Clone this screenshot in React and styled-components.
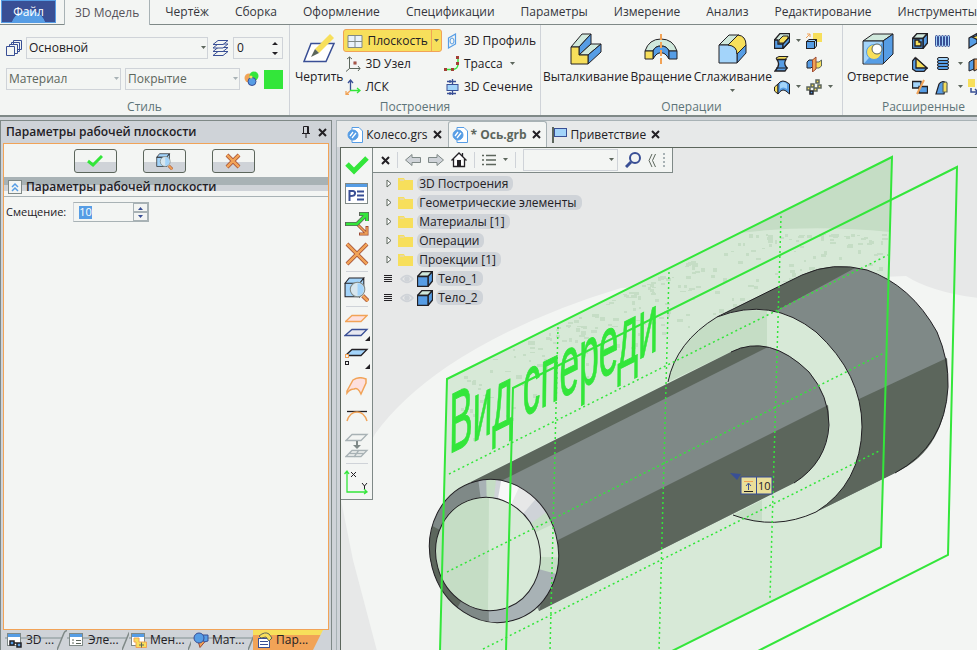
import React from "react";
import styled, { createGlobalStyle } from "styled-components";

const c = {
  paper: "#f3f5f3", chrome: "#cfd3d8", line: "#cfd3d8", mid: "#a8b2b5", steel: "#7f8987",
  dark: "#5c665c", ink: "#222024", navy: "#394f95", blue: "#569de5", sky: "#a3d4fa",
  mint: "#d0e9dc", yellow: "#f7df5b", orange: "#f1a357", green: "#33e63a", group: "#5d7478",
};

const GlobalStyle = createGlobalStyle`
  *, *::before, *::after { box-sizing: border-box; }
  body { margin: 0; overflow: hidden; background: ${c.chrome}; color: ${c.ink};
    font: 12px/16px "Open Sans", "Noto Sans", sans-serif; }
  button, input, select { font: inherit; color: inherit; margin: 0; padding: 0; }
  button { border: 0; background: none; white-space: nowrap; }
  svg { display: block; flex: none; }
`;

/* ---------- frame ---------- */
const Page = styled.div`display: flex; flex-direction: column; height: 100vh; overflow: hidden;`;
const TabBar = styled.nav`display: flex; flex: none; height: 25px; background: ${c.paper};
  border-bottom: 1px solid ${c.steel}; padding-left: 1px;`;
const FileTab = styled.button`flex: none; width: 55px; height: 23px; margin-right: 8px; color: #fff;
  border: 1px solid ${c.blue}; background: radial-gradient(ellipse at 50% 130%, ${c.blue} 0 46%, ${c.navy} 48%);`;
const RibbonTab = styled.button`
  flex: none; height: 24px; padding: 0 ${(p) => (p.$active ? 10 : 13)}px; color: #35353c;
  ${(p) => p.$active && `height: 25px; background: ${c.paper}; border: 1px solid ${c.mid};
    border-width: 0 1px; margin-right: 2px; color: #55525a;`}
`;
const Ribbon = styled.div`display: flex; flex: none; height: 92px; overflow: hidden; background: ${c.paper};
  border-bottom: 2px solid ${c.steel};`;
const Group = styled.section`
  display: flex; flex-direction: column; flex: none;
  padding: 4px ${(p) => p.$pad || 4}px 0; width: ${(p) => p.$width}px;
  border-right: 1px solid ${c.line};
`;
const GroupBody = styled.div`display: flex; height: 69px; gap: ${(p) => p.$gap || 0}px;`;
const GroupName = styled.h2`margin: 0; font-size: 12px; line-height: 17px; font-weight: 400; text-align: center; color: ${c.group};`;

/* ---------- ribbon controls ---------- */
const StyleRows = styled.div`display: flex; height: 69px; flex-direction: column; gap: 9px; padding-top: 8px;`;
const Row = styled.div`display: flex; align-items: center; gap: 4px;`;
const Combo = styled.div`
  position: relative; display: flex; flex: 1; min-width: 0;
  select { appearance: none; width: 100%; height: 22px; border: 1px solid ${c.line}; border-radius: 0;
    background: ${c.paper}; padding: 0 2px; color: ${(p) => (p.$muted ? c.dark : c.ink)}; outline: 0; }
  svg { position: absolute; right: 2px; top: 9px; pointer-events: none; }
`;
const Spin = styled.div`
  display: flex; align-items: center; width: 50px; height: 22px; border: 1px solid ${c.line}; padding-right: 4px;
  input { flex: 1; min-width: 0; border: 0; background: none; padding-left: 3px; outline: 0; }
`;
const Swatch = styled.button`width: 19px; height: 19px; background: ${c.green};`;
const BigButton = styled.button`
  display: flex; flex-direction: column; align-items: center; gap: 4px; flex: none; height: 69px; padding-top: 4px;
`;
const Column = styled.div`display: flex; flex-direction: column; flex: none; align-items: flex-start;`;
const SmallButton = styled.button`display: flex; align-items: center; gap: 4px; height: 23px; padding: 0 2px;`;
const SplitButton = styled.div`
  display: flex; height: 23px; border: 1px solid ${c.orange}; border-radius: 3px; background: ${c.yellow};
  button { display: flex; align-items: center; gap: 4px; padding: 0 3px; }
  button + button { border-left: 1px solid ${c.orange}; padding: 0 2px; }
`;
const IconGrid = styled.div`
  display: grid; flex: none; grid-template-columns: ${(p) => p.$cols}; grid-auto-rows: 23px; align-items: center;
  margin-left: ${(p) => p.$lead || 0}px;
  button { width: 16px; height: 16px; display: flex; align-items: center; }
`;

/* ---------- workspace ---------- */
const Workspace = styled.div`display: flex; flex: 1; min-height: 0; padding-top: 3px; gap: 4px;`;
const SidePanel = styled.aside`
  display: flex; flex-direction: column; flex: 0 0 34%; border: 1px solid ${c.steel}; border-width: 1px 1px 0; padding: 0 2px;
`;
const PanelTitle = styled.header`
  display: flex; align-items: center; height: 22px; flex: none; gap: 8px; padding: 0 3px;
  h1 { margin: 0 auto 0 0; font-size: 12px; font-weight: 600; line-height: 16px; }
  button { width: 8px; }
`;
const PanelBody = styled.form`flex: 1; min-height: 0; border: 1px solid ${c.orange}; background: ${c.paper};`;
const Confirm = styled.div`
  display: flex; justify-content: center; gap: 26px; padding: 5px 4px 4px 0;
  button { display: grid; place-items: center; width: 43px; height: 24px; border: 1px solid ${c.dark}; border-radius: 3px;
    background: linear-gradient(${c.paper} 55%, ${c.line} 55%); }
`;
const SectionHead = styled.div`
  display: flex; align-items: center; gap: 4px; height: 20px; padding-left: 4px; border-bottom: 1px solid ${c.mid};
  background: linear-gradient(${c.mid} 0 8px, ${c.line} 8px 14px, ${c.paper} 14px);
  h2 { margin: 0; font-size: 12px; line-height: 16px; font-weight: 600; }
  button { display: grid; place-items: center; width: 14px; height: 14px; background: ${c.paper}; border: 1px solid ${c.steel}; }
`;
const Field = styled.div`display: flex; align-items: center; gap: 7px; padding: 5px 2px; font-size: 11px;`;
const OffsetBox = styled.div`
  display: flex; justify-content: space-between; width: 76px; height: 20px; border: 1px solid ${c.mid};
  border-left-color: ${c.line}; padding-left: 5px; align-items: center;
  input { width: 13px; height: 13px; border: 0; background: ${c.blue}; color: #fff; outline: 0; }
`;
const Stepper = styled.div`
  display: flex; flex-direction: column;
  button { display: grid; place-items: center; width: 15px; height: 9px; background: ${c.paper}; border: 1px solid ${c.mid}; }
`;
const PanelTabs = styled.div`display: flex; flex: none; height: 20px; padding-left: 2px;`;
const PanelTab = styled.button`
  display: flex; align-items: center; justify-content: flex-start; gap: 3px; flex: none; width: 62px; padding-left: 2px;
  background: linear-gradient(${c.chrome} 7px, ${c.mid} 7px 9px, ${c.chrome} 9px);
  > svg + svg { margin-left: auto; }
  ${(p) => p.$active && `background: linear-gradient(${c.yellow} 5px, ${c.orange} 5px);
    clip-path: polygon(0 0, 100% 0, calc(100% - 10px) 100%, 0 100%); width: 70px; padding-left: 4px;`}
`;

const Documents = styled.main`display: flex; flex-direction: column; flex: 1; min-width: 0; border: 1px solid ${c.mid}; border-width: 1px 0 0 1px;`;
const DocTabs = styled.div`display: flex; flex: none; height: 26px; padding-left: 6px; background: #e7e9e9;`;
const DocTab = styled.div`
  display: flex; align-items: center; gap: 3px; padding: 0 3px; border: 1px solid transparent; border-bottom: 0;
  font-weight: ${(p) => (p.$active ? 700 : 400)}; border-radius: 3px 3px 0 0;
  ${(p) => p.$active && `background: ${c.paper}; border-color: ${c.mid}; color: ${c.dark};`}
  > button:first-child { display: flex; align-items: center; gap: 3px; font-weight: inherit; }
  > button:last-child { padding: 0 2px; }
`;
const Viewport = styled.div`
  display: grid; flex: 1; min-height: 0; margin-left: 3px; border: 1px solid ${c.dark}; border-width: 1px 0 0 1px;
  grid-template: minmax(0, 1fr) / minmax(0, 1fr); overflow: hidden;
  > * { grid-area: 1 / 1; }
`;
const Overlay = styled.div`display: flex; align-items: flex-start; min-height: 0; z-index: 1;`;
const ToolStrip = styled.div`
  display: flex; flex-direction: column; align-items: center; width: 32px; flex: none; background: ${c.paper};
  border: 1px solid ${c.steel}; border-width: 0 1px 1px 0; padding: 3px 0 1px;
  hr { width: 22px; height: 1px; margin: 2px 0; border: 0; background: ${c.line}; }
`;
const StripButton = styled.button`display: grid; place-items: center; width: 28px; height: ${(p) => p.$h || 30}px;`;
const TreeBar = styled.div`
  display: flex; align-items: center; width: 300px; height: 25px; padding: 0 7px 0 8px; gap: 7px;
  background: ${c.paper}; border: 1px solid ${c.steel}; border-width: 0 1px 1px 0;
  i { width: 1px; height: 16px; background: ${c.line}; }
`;
const TreeSearch = styled.div`
  position: relative; flex: 1; min-width: 0;
  input { display: block; width: 100%; height: 22px; border: 1px solid ${c.line}; background: ${c.paper}; outline: 0; }
  svg { position: absolute; right: 4px; top: 9px; }
`;
const Tree = styled.ul`list-style: none; margin: 0; padding: 1px 0 0 11px;`;
const Node = styled.li`
  display: flex; align-items: center; height: 19px; gap: ${(p) => (p.$body ? 3 : 6)}px;
  span { padding: 0 5px 0 2px; height: 15px; line-height: 15px; border-radius: 6px; background: ${c.line};
    margin-left: ${(p) => (p.$body ? 0 : -2)}px; }
  svg:first-child { margin: 0 ${(p) => (p.$body ? 5 : 0)}px 0 ${(p) => (p.$body ? 0 : 2)}px; }
`;
const Scene = styled.svg`width: 100%; height: 100%;`;

/* ---------- icons ---------- */
const Svg = ({ w = 16, h = 16, children, s = c.ink, f = "none", sw = 1 }) => (
  <svg width={w} height={h} viewBox={`0 0 ${w} ${h}`} fill={f} stroke={s} strokeWidth={sw} aria-hidden="true">{children}</svg>
);
const P = ({ d, f, s, w }) => <path d={d} fill={f} stroke={s} strokeWidth={w} />;
const Down = ({ color = c.dark }) => <Svg w={5} h={4} s="none" f={color}><P d="M0 0H5L2.500 3Z" /></Svg>;
const UpDown = () => <Svg w={6} h={14} s="none" f={c.ink}><P d="M0 4L3 1L6 4ZM0 11H6L3 14Z" /></Svg>;
const Cross = ({ size = 9, color = c.ink, w = 2 }) => <Svg w={size} h={size} s={color} sw={w}><P d={`M1 1L${size - 1} ${size - 1}M${size - 1} 1L1 ${size - 1}`} /></Svg>;

const Pages = () => <Svg s={c.navy} f={c.paper}><P d="M7.500 .5H15.500V9.500H7.500ZM5.500 2.500H13.500V11.500H5.500Z" /><P d="M3.500 4.500H11.500V13.500H3.500Z" /><P d="M.5 6.500H8.500V15.500H.5Z" /></Svg>;
const Levels = () => <Svg w={17} s={c.navy} f={c.paper}><P d="M1 15.500L6 11.500H16L11 15.500Z" /><P d="M1 11.500L6 7.500H16L11 11.500Z" /><P d="M1 8L6 4H16L11 8Z" /><P d="M1 4.500L6 .5H16L11 4.500Z" /></Svg>;
const Palette = () => <Svg s="none"><circle cx="5" cy="7" r="4.500" fill={c.orange} /><circle cx="10" cy="5" r="4.500" fill={c.green} /><circle cx="8" cy="10.500" r="4" fill={c.blue} stroke={c.navy} /><circle cx="7" cy="6" r="1.500" fill={c.yellow} /></Svg>;
const Draw = () => <Svg w={34} h={32} s="none"><P d="M9 10.500H32L24 28.500H2Z" f="#fff" s={c.navy} w={1.5} /><P d="M13 16L28 1L32 5L17 20Z" f={c.yellow} /><P d="M13 16L9 24L17 20Z" f={c.dark} /></Svg>;
const PlaneI = () => <Svg><P d="M1 2.500H15V14.500H1ZM8 2V15M1 8.500H15" f="#e9f2fb" s={c.steel} /></Svg>;
const Node3D = () => <Svg s={c.dark}><P d="M4.500 1V12.500H15M4.500 12.500L1 15.500M2 3L4.500 1L7 3M13 10L15 12.500L13 15" /><rect x="9" y="6" width="2" height="2" fill={c.orange} stroke="#8e3b3b" /></Svg>;
const LCS = () => <Svg><P d="M5.500 12V1M3 4L5.500 1L8 4" s={c.navy} w={1.3} /><P d="M5 11.500H15M12 9L15 11.500L12 14" s={c.green} w={1.3} /><P d="M5 12L1 15.500M1 12V15.500H4" s={c.orange} w={1.3} /></Svg>;
const Profile = () => <Svg s={c.blue}><P d="M4.500 5L11.500 1V11L4.500 15Z" w={1.2} /><ellipse cx="8" cy="8" rx="2" ry="3" /></Svg>;
const Trace = () => <Svg><P d="M1 13.500H9Q14 13 14 8V2" s={c.green} w={1.4} /><P d="M0 12H3V15H0ZM7 12H10V15H7ZM12 6H15V9H12ZM12 0H15V3H12Z" f="#a23f35" s="none" /></Svg>;
const Section = () => <Svg s={c.navy}><rect x="3" y="5.500" width="11" height="6" fill={c.sky} /><P d="M8.500 0V5M8.500 12V16M3 2.500H12M3 14.500H12M6 1V4M6 13V16" w={1.3} /></Svg>;
const Extrude = () => <Svg w={32} h={32}><g transform="translate(1 1)"><P d="M0 13L11 0H20L8 13Z" f={c.mint} /><P d="M8 13L20 0V10L8 21Z" f={c.blue} /><P d="M8 21L20 10H30L17 21Z" f={c.mint} /><P d="M17 21L30 10V18L17 30Z" f={c.blue} /><P d="M0 13H8V21H17V30H0Z" f={c.yellow} /></g></Svg>;
const Revolve = () => <Svg w={34} h={32}><g transform="translate(1 1)"><P d="M0 17Q4 5 16 5Q28 5 32 17H24Q22 12 16 12Q10 12 8 17Z" f={c.mint} /><P d="M8 17Q10 12 16 12Q22 12 24 17V25Q20 18 16 19Q12 18 8 25Z" f={c.blue} /><P d="M0 17H8V25H0Z" f={c.yellow} /><P d="M24 17H32V25H24Z" f={c.blue} /><path d="M16 0V30" stroke={c.orange} strokeWidth="2" strokeDasharray="6 2" /></g></Svg>;
const Smooth = () => <Svg w={30} h={32}><g transform="translate(1 1)"><P d="M0 11L10 1H20L10 11Z" f={c.mint} /><P d="M18 20L27 11V19L18 29Z" f={c.blue} /><P d="M0 11H9Q18 11 18 20V29H0Z" f={c.sky} /><P d="M9 11L19 1Q27 2 27 11L18 20Q18 12 9 11Z" f={c.yellow} /></g></Svg>;
const Hole = () => <Svg w={32} h={32}><g transform="translate(1 1)"><P d="M0 7L10 0H30L20 7Z" f={c.mint} /><P d="M20 7L30 0V20L20 30Z" f={c.blue} /><P d="M0 7H20V30H0Z" f={c.sky} /><P d="M20 8V29.500H1Z" f={c.blue} s="none" /><circle cx="11" cy="18" r="7.500" fill={c.yellow} stroke={c.blue} /><circle cx="14" cy="15" r="5" fill="#fff" stroke={c.dark} /></g></Svg>;
const cube = <><P d="M.5 5.500L5 .5H15.500L11 5.500Z" f={c.mint} /><P d="M11 5.500L15.500 .5V10L11 15.500Z" f={c.blue} /><P d="M.5 5.500H11V15.500H.5Z" f={c.blue} /></>;
const CubeI = () => <Svg sw={1.3}>{cube}</Svg>;
const Pocket = () => <Svg sw={1.3}><P d="M.5 7L6 .5H15.500V8.500L9 15.500H.5Z" f={c.mint} /><P d="M.5 7H4V11H9V15.500H.5Z" f={c.blue} /><P d="M9 11L15.500 4V8.500L9 15.500Z" f={c.blue} /><P d="M5 10V7L9 3H14V5L9.500 10Z" f={c.yellow} s={c.ink} w={1} /></Svg>;
const Loft = () => <Svg><P d="M2 2L5 .5H14L11 3.500H3Z" f={c.yellow} /><P d="M3 3.500H12Q9 8 13 12L11 15H1Q7 9 3 3.500Z" f={c.blue} w={1.3} /><P d="M2 12H14" /></Svg>;
const Sweep = () => <Svg><P d="M.5 8L4 5V15L.5 12Z" f={c.yellow} /><P d="M4 5Q8 -1 15.500 5V15L12 12Q8 9 4 15Z" f={c.blue} /><P d="M6 5Q9 1 13 5V10Q9 7 6 10Z" f={c.sky} s="none" /></Svg>;
const Move = () => <Svg><rect x="7" width="9" height="9" fill={c.yellow} stroke="none" /><P d="M.5 8.500L3 6.500H10.500L8.500 8.500ZM8.500 8.500L10.500 6.500V13L8.500 15.500Z" f={c.sky} /><rect x=".5" y="8.500" width="8" height="7" fill={c.blue} /><P d="M0 5L4 1M1 1H4V4" s={c.orange} /></Svg>;
const Mirror = () => <Svg><P d="M1 6L3 4H7V10L5 12H1Z" f={c.blue} /><P d="M9 6H13L15.500 4V10L13 12H9Z" f={c.yellow} s={c.dark} /><P d="M6.500 4L10 1V13L6.500 16Z" f={c.orange} s="#9d4a35" /></Svg>;
const Array3 = () => <Svg>{[[1, 8], [5, 5], [10, 1], [12, 6], [8, 9], [4, 12]].map(([x, y], i) => <rect key={i} x={x} y={y} width="3" height="3" fill={i === 5 ? c.blue : c.yellow} stroke={i === 5 ? c.ink : c.dark} strokeWidth="1.500" />)}</Svg>;
const Shell = () => <Svg sw={1.4}>{cube}<P d="M3 7H7V9H9V13H3Z" f={c.yellow} /></Svg>;
const Rib = () => <Svg sw={1.3}><P d="M.5 5L3 2L15 12L12 15.500H4L.5 13Z" f={c.blue} /><P d="M4 2V12H15Z" f={c.yellow} /></Svg>;
const Cut = () => <Svg sw={1.3}><P d="M.5 2.500H9V9H.5Z" f={c.sky} /><P d="M7 7.500H15.500V14H7Z" f={c.blue} /><P d="M12 1L5 15" s={c.orange} w={2} /></Svg>;
const Thread = () => <Svg><P d="M1 4H15V12H1Z" f={c.sky} s="none" />{[1, 4, 7, 10, 13].map((x) => <rect key={x} x={x - .5} y="2.500" width="2" height="11" rx="1" fill={c.sky} stroke={c.navy} />)}</Svg>;
const Spring = () => <Svg>{[2, 5, 8, 11].map((y) => <rect key={y} x="2.500" y={y - .5} width="11" height="3" rx="1.500" fill={y === 2 ? c.sky : c.blue} />)}</Svg>;
const Draft = () => <Svg sw={1.2}><P d="M1 15L4 5Q7 1 11 4L9 15Z" f={c.blue} /><P d="M8 4Q13 1 12 7V13H8Z" f={c.yellow} s={c.dark} /></Svg>;
const Bend = () => <Svg sw={1.2}><P d="M1 5L9 .5V10L1 15Z" f={c.blue} /><P d="M4 4L12 2V8Z" f={c.yellow} /></Svg>;
const Split = () => <Svg><P d="M1 6L6 3V13L1 15Z" f={c.blue} /><P d="M6 3H12V12L6 15Z" f={c.orange} /></Svg>;
const Copy = () => <Svg><rect width="7" height="8" fill={c.yellow} stroke="none" /><P d="M3 9V13H9M7 10L10 13L7 16" s={c.navy} w={1.5} /></Svg>;

const Tick = ({ big }) => <Svg w={big ? 24 : 16} h={big ? 20 : 12} s={c.green} sw={big ? 5 : 3}><P d={big ? "M2 9L9 16L22 3" : "M1 6L6 10L15 1"} /></Svg>;
const Cancel = ({ size = 16 }) => <Svg w={size} h={size}><P d={`M2 2L${size - 2} ${size - 2}M${size - 2} 2L2 ${size - 2}`} s="#9d4a35" w={4} /><P d={`M2 2L${size - 2} ${size - 2}M${size - 2} 2L2 ${size - 2}`} s={c.orange} w={2.5} /></Svg>;
const Look = ({ big }) => {
  const n = big ? 25 : 17;
  return <svg width={n} height={n} viewBox="0 0 24 24" aria-hidden="true"><g stroke={c.ink} fill={c.sky}><path d="M1 6L5 1H19L15 6ZM1 6H15V19H1ZM15 6L19 1V14L15 19Z" /></g><path d="M18 18L23 23" stroke="#9d4a35" strokeWidth="4" /><path d="M18 18L23 23" stroke={c.orange} strokeWidth="2.500" /><circle cx="13" cy="12" r="7" fill="#d7e6ee" stroke={c.steel} /><path d="M13 6A6 6 0 0 1 13 18Z" fill={c.sky} /></svg>;
};
const Pin = () => <Svg w={8} h={12}><P d="M1.500 7V.5H6.500V7M0 7.500H8M4 8V12M5.500 1V7" /></Svg>;
const Chevrons = () => <Svg w={8} h={10} s={c.blue} sw={1.5}><P d="M1 5L4 2L7 5M1 9L4 6L7 9" /></Svg>;
const Wedge = ({ up }) => <Svg w={7} h={4} s="none" f={c.navy}><P d={up ? "M1 4L3.500 1L6 4Z" : "M1 0H6L3.500 3Z"} /></Svg>;
const Slash = () => <Svg w={10} h={20} s={c.steel}><P d="M0 20L7 3Q8 1 10 .5V20Z" f={c.chrome} s="none" /><P d="M0 20L7 3Q8 1 10 .5" w={1.5} /></Svg>;
const win = <><rect x=".5" y="1.500" width="13" height="12" fill="#fff" stroke={c.steel} /><P d="M1 2H13V5H1Z" f={c.blue} s="none" /></>;
const ModelTab = () => <Svg>{win}<P d="M3 9H7V13H3ZM10 11H14V15H10ZM7 11H10" f={c.blue} w={1.5} /></Svg>;
const ListTab = () => <Svg>{win}<P d="M3 8H5M3 11H5M7 8.500H12M7 11.500H12" s={c.dark} /></Svg>;
const MenuTab = () => <Svg>{win}<P d="M3 6H8V10H15.500V15.500H5V10H3Z" f={c.yellow} s={c.orange} /><P d="M8 13H13M10.500 10.500V15.500" s={c.dark} /></Svg>;
const MatTab = () => <Svg><P d="M5 9L15 6L7 15.500Z" f={c.orange} s="#9d4a35" /><P d="M9 3H15V9L11 10Z" f={c.blue} s={c.navy} /><circle cx="6" cy="6" r="5" fill={c.blue} stroke={c.navy} /></Svg>;
const ParTab = () => <Svg><rect x="1.500" y="6.500" width="11" height="9" fill="#fff" stroke={c.navy} /><P d="M3 9.500H11M3 12.500H11" s={c.navy} /><P d="M2 4Q8 -1 12 2L15 6L12 9L9 5L4 6Z" f={c.yellow} s={c.dark} /></Svg>;
const DocIcon = () => <Svg><P d="M5 .5H12L15.500 4V15.500H5Z" f="#fff" s={c.blue} /><circle cx="6" cy="8" r="5" fill={c.blue} stroke={c.blue} /><P d="M3 9L6 5M5 11L9 6" s="#fff" w={1.3} /></Svg>;
const Flag = () => <Svg w={17}><P d="M2 0V16" w={2} s={c.dark} /><rect x="3.500" y="1.500" width="12" height="8" fill={c.sky} stroke={c.navy} /></Svg>;
const Props = () => <Svg w={23} h={22}><rect x=".5" y=".5" width="22" height="20" fill="#fff" stroke={c.steel} /><P d="M1 1H22V4H1Z" f={c.blue} s="none" /><P d="M4.500 18V8H8Q10.500 8.500 10 10.500Q10 13 5 13M12 8.500H19M12 12.500H19M12 16.500H19" s={c.navy} w={2} /></Svg>;
const Branch = () => <Svg w={24} h={24}><P d="M12 12L21 21M22 14V22H14" s="#9d4a35" w={3} /><P d="M12 12L21 21M22 15V22H15" s={c.orange} w={1.5} /><P d="M0 12H12L21 3M14 2H22V9" s={c.dark} w={4} /><P d="M1 12H12L21 3M15 2H22V9" s={c.green} w={2.5} /></Svg>;
const Sheet = ({ s, f, h = 9 }) => <Svg w={23} h={h} s={s}><P d="M.5 7.500L7 1.500H22L16 7.500Z" f={f} w={1.3} /></Svg>;
const SheetMore = () => <Svg w={26} h={14}><P d="M1 7.500L8 1.500H23L17 7.500Z" f="#e7e8f0" s={c.navy} w={1.3} /><P d="M26 8V13H21Z" f={c.ink} s="none" /></Svg>;
const SheetLink = () => <Svg w={26} h={24}><P d="M2 9L8 3.500H23L17 9.500H5" f={c.sky} w={1.3} /><rect x="1.500" y="8.500" width="3" height="3" fill={c.paper} stroke={c.orange} /><rect x="1.500" y="15.500" width="3" height="3" /><P d="M26 18V23H21Z" f={c.ink} s="none" /></Svg>;
const Surface = () => <Svg w={22} h={20} s={c.orange}><P d="M1 14L7 3Q13 -1 20 2V6L15 17Q12 10 8 12Q4 12 1 16Z" f="#fde0de" w={1.5} /></Svg>;
const Tangent = () => <Svg w={22} h={14}><P d="M1 2.500H21" w={1.3} /><P d="M1 12Q4 3 11 3Q18 3 21 12" s={c.orange} w={1.5} /></Svg>;
const Project = () => <Svg w={24} h={26} s={c.mid}><P d="M1 7.500L7 1.500H22L16 7.500ZM1 23.500L7 17.500H22L16 23.500ZM4 20.500H19M14 17L9 24" w={1.3} /><P d="M12 8V14" s={c.steel} w={2} /><P d="M8 12H16L12 16Z" f={c.steel} s="none" /></Svg>;
const Axes = () => <Svg w={25} h={26}><P d="M3 2V23H23M.5 5L3 2L5 5M20 20L23 23L20 25" s={c.green} w={1.3} /><P d="M7 3L12 8M12 3L7 8M18 14L20.500 17L23 14M20.500 17V20" s={c.ink} /></Svg>;
const Back = ({ flip }) => <Svg w={16} h={12} s={c.steel} f={c.line}><P d={flip ? "M15.500 6L9 .5V3.500H.5V8.500H9V11.500Z" : "M.5 6L7 .5V3.500H15.500V8.500H7V11.500Z"} /></Svg>;
const Home = () => <Svg><P d="M.5 8.500L8 1L15.500 8.500M2.500 7V14.500H13.500V7M11.500 1V4" f="#fff" w={1.3} /><P d="M6 8H10V15H6Z" f={c.ink} s="none" /></Svg>;
const ListI = () => <Svg w={14} h={12} s={c.dark} sw={1.5}><P d="M0 1.500H2M4 1.500H14M0 6H2M4 6H14M0 10.500H2M4 10.500H14" /></Svg>;
const Search = () => <Svg s={c.navy}><circle cx="10" cy="6" r="5" strokeWidth="2" /><P d="M6 10L1 15" w={3} /></Svg>;
const Collapse = () => <Svg w={8} h={13} s={c.dark}><P d="M4 0L1 6.500L4 13M7.500 0L4.500 6.500L7.500 13" /></Svg>;
const Grip = () => <Svg w={2} h={14} s={c.mid} sw={2}><path d="M1 0V14" strokeDasharray="2 2" /></Svg>;
const Folder = () => <Svg w={15} h={12} s="none"><P d="M0 0H6L7 2H15V12H0Z" f={c.yellow} /><P d="M2 1H6V3H2Z" f="#e8d9a0" /></Svg>;
const Twist = () => <Svg w={6} h={9} s={c.dark}><P d="M1 1V8L5 4.500Z" f="#fff" /></Svg>;
const Lines = () => <Svg w={8} h={9}><P d="M0 1.500H8M0 3.500H8M0 5.500H8M0 7.500H8" /></Svg>;
const Eye = () => <Svg w={14} h={10} s={c.line} sw={1.5}><P d="M1 5Q7 -2 13 5Q7 12 1 5Z" /><circle cx="7" cy="5" r="2" fill={c.line} /></Svg>;

/* ---------- model drawing ---------- */
const rand = (n) => Math.abs(Math.sin(n) * 43758.5453) % 1;
const specks = Array.from({ length: 260 }, (_, i) => {
  const a = rand(i * 12.9898 + 1);
  const b = rand(i * 78.233 + 5);
  const x = 452 + a * 432;
  const top = 376 - (x - 446) * 0.499;
  return { x: Math.round(x), y: Math.round(Math.max(top + 6, 234) + b * b * 70), w: 2 + Math.round(rand(i * 3.7) * 4), h: 1 + Math.round(rand(i * 9.1) * 3) };
});
const Dots = ({ d }) => <path d={d} fill="none" stroke={c.green} strokeWidth="1.500" strokeDasharray="2 3" />;

function Model() {
  return (
    <Scene aria-label="Ось">
      <defs>
        <clipPath id="sheet"><path d="M446 379L891 157L880 547L671 651H439Z" /></clipPath>
        <clipPath id="rim"><ellipse cx="493" cy="551" rx="64" ry="72" transform="rotate(-15 493 551)" /></clipPath>
      </defs>
      <g transform="translate(-340 -148)">
        <rect x="340" y="148" width="2400" height="1600" fill={c.paper} />
        <path d="M340 148H2740V300L977 298Q930 292 905 276L620 288Q520 318 447 366Q400 398 374 434L340 500Z" fill="#e7e8e8" />
        <path d="M340 500L352 560L376 651V900H340Z" fill="#e7e8e8" />
        <path d="M446 379L891 157L880 547L671 651H439Z" fill="#d7e9d7" />
        <path d="M738 233L891 157L889 232Q810 224 738 233Z" fill="#c5ddc5" />
        <g clipPath="url(#sheet)" fill="#c5ddc5">
          {specks.map((p, i) => <rect key={i} x={p.x} y={p.y} width={p.w} height={p.h} />)}
        </g>

        <path d="M716 317L801 275Q832 261 866 270Q910 285 936 332Q948 360 947 387Q944 446 894 473L815 512Z" fill={c.steel} />
        <path d="M716 317L801 275Q826 263 854 268L773 312Q740 306 716 317Z" fill={c.dark} />
        <path d="M858 399L946 358Q954 446 894 473L815 512Q866 475 858 399Z" fill={c.dark} />
        <path d="M716 317L801 275Q832 261 866 270Q910 285 936 332Q948 360 947 387Q944 446 894 473" fill="none" stroke={c.ink} />

        <path d="M667 382Q675 342 716 317Q770 296 815 332Q861 374 861 427Q860 484 815 512Q774 531 732 515L793 483L730 352Z" fill="#d7e9d7" />
        <path d="M667 382Q675 342 716 317Q740 308 766 311V347Q745 344 730 352ZM732 515L761 500V522Q746 521 732 515Z" fill="#c5ddc5" />
        <path d="M667 382Q675 342 716 317Q770 296 815 332Q861 374 861 427Q860 484 815 512Q774 531 732 515" fill="none" stroke={c.ink} />

        <path d="M470 482L730 352Q768 333 808 372Q828 396 828 425Q826 462 793 483L538 611Z" fill={c.steel} />
        <path d="M470 482L730 352Q750 343 767 347L500 481Z" fill={c.dark} />
        <path d="M557 540L827 405Q833 459 793 483L538 611Z" fill={c.dark} />
        <path d="M730 352Q768 333 808 372Q828 396 828 425Q826 462 793 483" fill="none" stroke={c.ink} />

        <g clipPath="url(#rim)">
          <rect x="420" y="470" width="145" height="160" fill={c.steel} />
          <path d="M487 555L420 520V590L455 610Z" fill={c.dark} />
          <path d="M487 555L476 470H490Z" fill={c.mid} />
          <path d="M487 555L485 470H498Z" fill="#c5ddc5" />
          <path d="M487 555L496 470H507Z" fill={c.line} />
          <path d="M487 555L502 470L550 500Z" fill="#f8f8f8" />
          <path d="M487 555L525 472L555 505Z" fill="#e7e8e8" />
          <path d="M487 555L544 488L565 515Z" fill={c.line} />
          <path d="M487 555L555 505L570 530Z" fill="#c5ddc5" />
          <path d="M487 555L565 518L570 562Z" fill="#d7e9d7" />
          <path d="M487 555L570 558V580Z" fill="#c5ddc5" />
          <path d="M487 555L570 578V630H488Z" fill={c.mid} />
        </g>
        <ellipse cx="493" cy="551" rx="64" ry="72" transform="rotate(-15 493 551)" fill="none" stroke={c.ink} />
        <ellipse cx="487" cy="554" rx="52" ry="57" transform="rotate(-15 487 554)" fill="#d7e9d7" />
        <path d="M488 497Q444 497 435 543Q433 600 487 611Z" fill="#c5ddc5" />
        <ellipse cx="487" cy="554" rx="52" ry="57" transform="rotate(-15 487 554)" fill="none" stroke={c.ink} />

        <Dots d="M448 474L887 255" /><Dots d="M446 572L883 353" /><Dots d="M482 649L880 450" />
        <Dots d="M557 327L549 651" /><Dots d="M668 272L658 651" /><Dots d="M780 216L769 598" />
        <path d="M439 651L446 379L891 157L880 547L671 651" fill="none" stroke={c.green} strokeWidth="2" />
        <path d="M505 651L512 388L956 167L947 555L757 651" fill="none" stroke={c.green} strokeWidth="2" />
        <g transform="matrix(.415 -.207 -.01 1 448 454)">
          <text fontFamily="Liberation Sans, sans-serif" fontSize="85" fill={c.green} stroke={c.green}>Вид спереди</text>
        </g>
        <path d="M729 473L740 474L736 480Z" fill={c.navy} />
        <rect x="740" y="477" width="31" height="17" fill="#eadf9a" stroke={c.navy} />
        <path d="M755.500 477V494" stroke={c.navy} />
        <path d="M743 481.500H752" stroke={c.orange} /><path d="M743 491.500H752" stroke={c.ink} />
        <path d="M747.500 490V484M745 486L747.500 483L750 486" stroke={c.navy} fill="none" />
        <text x="757" y="490" fontFamily="Open Sans, sans-serif" fontSize="11" fill={c.ink}>10</text>
      </g>
    </Scene>
  );
}

/* ---------- page ---------- */
const ribbonTabs = ["3D Модель", "Чертёж", "Сборка", "Оформление", "Спецификации", "Параметры", "Измерение", "Анализ", "Редактирование", "Инструменты"];
const folders = ["3D Построения", "Геометрические элементы", "Материалы [1]", "Операции", "Проекции [1]"];
const panelTabs = [["3D ...", ModelTab], ["Эле...", ListTab], ["Мен...", MenuTab], ["Мат...", MatTab], ["Пар...", ParTab]];
const I = ({ of: Icon, label }) => <button type="button" aria-label={label}><Icon /></button>;
const D = () => <button type="button" aria-label="Ещё"><Down /></button>;

export default function App() {
  return (
    <Page>
      <GlobalStyle />
      <TabBar>
        <FileTab>Файл</FileTab>
        {ribbonTabs.map((t, i) => <RibbonTab key={t} $active={i === 0}>{t}</RibbonTab>)}
      </TabBar>
      <Ribbon>
        <Group $width={290} $pad={6}>
          <StyleRows>
            <Row>
              <Pages />
              <Combo><select aria-label="Слой" defaultValue="Основной"><option>Основной</option></select><Down /></Combo>
              <Levels />
              <Spin><input aria-label="Уровень" defaultValue="0" /><UpDown /></Spin>
            </Row>
            <Row>
              <Combo $muted><select aria-label="Материал"><option>Материал</option></select><Down color={c.mid} /></Combo>
              <Combo $muted><select aria-label="Покрытие"><option>Покрытие</option></select><Down color={c.mid} /></Combo>
              <I of={Palette} label="Цвета" /><Swatch aria-label="Цвет" />
            </Row>
          </StyleRows>
          <GroupName>Стиль</GroupName>
        </Group>
        <Group $width={251} $pad={5}>
          <GroupBody>
            <BigButton><Draw /><span>Чертить</span></BigButton>
            <Column>
              <SplitButton><button><PlaneI />Плоскость</button><button aria-label="Варианты"><Down /></button></SplitButton>
              <SmallButton><Node3D />3D Узел</SmallButton>
              <SmallButton><LCS />ЛСК</SmallButton>
            </Column>
            <Column>
              <SmallButton><Profile />3D Профиль</SmallButton>
              <SmallButton><Trace />Трасса&nbsp;<Down /></SmallButton>
              <SmallButton><Section />3D Сечение</SmallButton>
            </Column>
          </GroupBody>
          <GroupName>Построения</GroupName>
        </Group>
        <Group $width={302} $pad={2}>
          <GroupBody $gap={2}>
            <BigButton><Extrude /><span>Выталкивание</span></BigButton>
            <BigButton><Revolve /><span>Вращение</span></BigButton>
            <BigButton><Smooth /><span>Сглаживание</span><Down /></BigButton>
            <IconGrid $cols="22px 10px 22px 8px">
              <I of={Pocket} label="Булева операция" /><D /><I of={Move} label="Перемещение" /><span />
              <I of={Loft} label="По сечениям" /><span /><I of={Mirror} label="Симметрия" /><span />
              <I of={Sweep} label="По траектории" /><D /><I of={Array3} label="Массив" /><D />
            </IconGrid>
          </GroupBody>
          <GroupName>Операции</GroupName>
        </Group>
        <Group $width={162} $pad={4}>
          <GroupBody>
            <BigButton><Hole /><span>Отверстие</span></BigButton>
            <IconGrid $cols="23px 23px 10px 16px" $lead={3}>
              <I of={Shell} label="Оболочка" /><I of={Thread} label="Резьба" /><span /><I of={Bend} label="Сгиб" />
              <I of={Rib} label="Ребро" /><I of={Spring} label="Пружина" /><D /><I of={Split} label="Разделение" />
              <I of={Cut} label="Отсечение" /><I of={Draft} label="Уклон" /><D /><I of={Copy} label="Копия" />
            </IconGrid>
          </GroupBody>
          <GroupName>Расширенные</GroupName>
        </Group>
      </Ribbon>

      <Workspace>
        <SidePanel>
          <PanelTitle><h1>Параметры рабочей плоскости</h1><I of={Pin} label="Закрепить" /><I of={Cross} label="Закрыть" /></PanelTitle>
          <PanelBody onSubmit={(e) => e.preventDefault()}>
            <Confirm><I of={Tick} label="Применить" /><I of={Look} label="Просмотр" /><I of={Cancel} label="Отмена" /></Confirm>
            <SectionHead><I of={Chevrons} label="Свернуть" /><h2>Параметры рабочей плоскости</h2></SectionHead>
            <Field>
              <label htmlFor="offset">Смещение:</label>
              <OffsetBox>
                <input id="offset" defaultValue="10" />
                <Stepper><button type="button" aria-label="Больше"><Wedge up /></button><button type="button" aria-label="Меньше"><Wedge /></button></Stepper>
              </OffsetBox>
            </Field>
          </PanelBody>
          <PanelTabs>
            {panelTabs.map(([t, Icon], i) => <PanelTab key={t} $active={i === 4}><Icon />{t}{i < 4 && <Slash />}</PanelTab>)}
          </PanelTabs>
        </SidePanel>

        <Documents>
          <DocTabs>
            <DocTab><button><DocIcon />Колесо.grs</button><I of={Cross} label="Закрыть Колесо.grs" /></DocTab>
            <DocTab $active><button><DocIcon />* Ось.grb</button><I of={Cross} label="Закрыть Ось.grb" /></DocTab>
            <DocTab><button><Flag />Приветствие</button><I of={Cross} label="Закрыть Приветствие" /></DocTab>
          </DocTabs>
          <Viewport>
            <Model />
            <Overlay>
              <ToolStrip>
                <StripButton $h={28} aria-label="Применить"><Tick big /></StripButton>
                <StripButton aria-label="Параметры"><Props /></StripButton>
                <StripButton aria-label="Зависимости"><Branch /></StripButton>
                <StripButton aria-label="Отмена"><Cancel size={24} /></StripButton>
                <hr />
                <StripButton aria-label="Просмотр"><Look big /></StripButton>
                <hr />
                <StripButton $h={18} aria-label="Плоскость"><Sheet s={c.orange} f="#fde0de" /></StripButton>
                <StripButton $h={16} aria-label="Грань"><SheetMore /></StripButton>
                <StripButton $h={30} aria-label="Точка и плоскость"><SheetLink /></StripButton>
                <StripButton $h={28} aria-label="Поверхность"><Surface /></StripButton>
                <StripButton aria-label="Касательная"><Tangent /></StripButton>
                <StripButton aria-label="Проекция"><Project /></StripButton>
                <hr />
                <StripButton $h={32} aria-label="Система координат"><Axes /></StripButton>
              </ToolStrip>
              <div>
                <TreeBar>
                  <I of={Cross} label="Закрыть дерево" /><i /><button aria-label="Назад"><Back /></button>
                  <button aria-label="Вперёд"><Back flip /></button><I of={Home} label="Начало" /><i />
                  <I of={ListI} label="Список" /><Down /><i />
                  <TreeSearch><input aria-label="Поиск" /><Down /></TreeSearch>
                  <I of={Search} label="Найти" /><I of={Collapse} label="Свернуть" /><Grip />
                </TreeBar>
                <Tree>
                  {folders.map((t) => <Node key={t}><Twist /><Folder /><span>{t}</span></Node>)}
                  {["Тело_1", "Тело_2"].map((t) => <Node key={t} $body><Lines /><Eye /><CubeI /><span>{t}</span></Node>)}
                </Tree>
              </div>
            </Overlay>
          </Viewport>
        </Documents>
      </Workspace>
    </Page>
  );
}
